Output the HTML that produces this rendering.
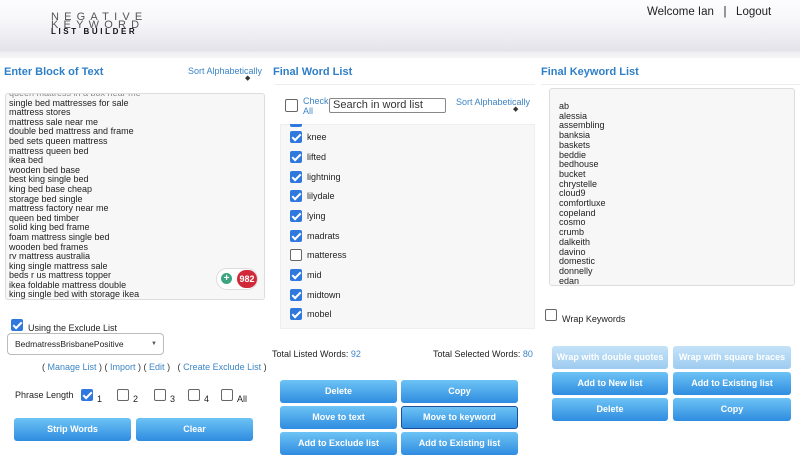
<!DOCTYPE html>
<html><head><style>
*{box-sizing:border-box;margin:0;padding:0}
body{width:800px;height:462px;overflow:hidden;background:#fff;font-family:"Liberation Sans",Arial,sans-serif;position:relative;color:#333}
.a{position:absolute}
.hdr{left:0;top:0;width:800px;height:58px;background:linear-gradient(#fdfdfe 0%,#f6f6f9 40%,#e3e3ea 88%,#f0f0f3 90%,#f4f4f6 100%)}
.h{font-size:11px;font-weight:bold;color:#2f7fc8}
.lnk{font-size:9px;color:#3d85c6}
.ta{border:1px solid #ddd;background:#f7f7f7;border-radius:3px;overflow:hidden}
.ta div{font-size:9px;line-height:9.6px;color:#222;white-space:nowrap}
.btn{position:absolute;height:23px;border-radius:3px;background:linear-gradient(#6dc3f5,#2f8ce0);color:#fff;font-size:9px;font-weight:bold;text-align:center;line-height:23px}
.btn.l{background:linear-gradient(#c5e3f8,#9dcbf0)}
.cb{position:absolute;width:12px;height:12px;border-radius:2px;background:#2f78de}
.cb:after{content:"";position:absolute;left:4px;top:1px;width:3px;height:7px;border:solid #fff;border-width:0 2px 2px 0;transform:rotate(45deg)}
.ub{position:absolute;width:12px;height:12px;border-radius:2px;border:1px solid #666;background:#fff}
.it{position:absolute;left:307px;font-size:9px;color:#222}
.s{font-size:9px;color:#222}
.kw div{line-height:9.7px!important;font-size:9px!important}
</style></head><body>
<div class="a hdr"></div>
<div class="a" style="left:51px;top:13px;font-size:11px;letter-spacing:5.2px;color:#555;line-height:8px">NEGATIVE<br>KEYWORD</div>
<div class="a" style="left:51px;top:28px;font-size:8px;letter-spacing:2.6px;color:#111;font-weight:bold;line-height:7px">LIST BUILDER</div>
<div class="a" style="left:647px;top:6px;font-size:11.5px;color:#222">Welcome Ian &nbsp;&nbsp;| &nbsp;&nbsp;Logout</div>

<div class="a h" style="left:4px;top:66px">Enter Block of Text</div>
<div class="a lnk" style="left:188px;top:66px">Sort Alphabetically</div>
<div class="a" style="left:245px;top:74px;font-size:7px">&#9670;</div>
<div class="a h" style="left:273px;top:66px">Final Word List</div>
<div class="a h" style="left:541px;top:66px">Final Keyword List</div>
<div class="a" style="left:275px;top:84px;width:260px;height:1px;background:#eee"></div>
<div class="a" style="left:541px;top:84px;width:259px;height:1px;background:#eee"></div>

<div class="a ta" style="left:5px;top:93px;width:260px;height:207px;padding:0 0 0 3px">
<div style="margin-top:-5px;color:#888">queen mattress in a box near me</div>
<div>single bed mattresses for sale</div><div>mattress stores</div><div>mattress sale near me</div><div>double bed mattress and frame</div><div>bed sets queen mattress</div><div>mattress queen bed</div><div>ikea bed</div><div>wooden bed base</div><div>best king single bed</div><div>king bed base cheap</div><div>storage bed single</div><div>mattress factory near me</div><div>queen bed timber</div><div>solid king bed frame</div><div>foam mattress single bed</div><div>wooden bed frames</div><div>rv mattress australia</div><div>king single mattress sale</div><div>beds r us mattress topper</div><div>ikea foldable mattress double</div><div>king single bed with storage ikea</div>
</div>
<div class="a" style="left:216px;top:268px;width:42px;height:22px;border-radius:11px;background:#fff;border:1px solid #ddd"></div>
<div class="a" style="left:221px;top:273px;width:11px;height:11px;border-radius:50%;background:#3aa57e;color:#fff;font-size:10px;line-height:11px;text-align:center;font-weight:bold">+</div>
<div class="a" style="left:237px;top:270px;width:20px;height:18px;border-radius:9px;background:#d02a3a;color:#fff;font-size:9px;font-weight:bold;line-height:18px;text-align:center">982</div>

<div class="cb" style="left:11px;top:319px"></div>
<div class="a s" style="left:28px;top:323px">Using the Exclude List</div>
<div class="a" style="left:7px;top:333px;width:157px;height:22px;border:1px solid #bbb;border-radius:4px;background:#fff;font-size:8.5px;line-height:20px;padding-left:7px;color:#222">BedmatressBrisbanePositive<span style="position:absolute;right:6px;font-size:6px;color:#555">&#9660;</span></div>
<div class="a lnk" style="left:42px;top:362px;color:#3d85c6"><span style="color:#333">(</span> Manage List <span style="color:#333">) (</span> Import <span style="color:#333">) (</span> Edit <span style="color:#333">) &nbsp;&nbsp;(</span> Create Exclude List <span style="color:#333">)</span></div>
<div class="a s" style="left:15px;top:390px">Phrase Length</div>
<div class="cb" style="left:81px;top:389px"></div><div class="a s" style="left:97px;top:394px">1</div>
<div class="ub" style="left:117px;top:389px"></div><div class="a s" style="left:133px;top:394px">2</div>
<div class="ub" style="left:154px;top:389px"></div><div class="a s" style="left:170px;top:394px">3</div>
<div class="ub" style="left:188px;top:389px"></div><div class="a s" style="left:204px;top:394px">4</div>
<div class="ub" style="left:221px;top:389px"></div><div class="a s" style="left:237px;top:394px">All</div>
<div class="btn" style="left:14px;top:418px;width:117px">Strip Words</div>
<div class="btn" style="left:136px;top:418px;width:117px">Clear</div>

<div class="a" style="left:280px;top:124px;width:255px;height:205px;background:#f7f7f7;border:1px solid #eee;overflow:hidden"></div>
<div class="cb" style="left:290px;top:124px;height:3px;border-radius:0 0 2px 2px"></div>
<div class="cb" style="left:290px;top:131px"></div><div class="it" style="top:132px">knee</div>
<div class="cb" style="left:290px;top:151px"></div><div class="it" style="top:152px">lifted</div>
<div class="cb" style="left:290px;top:171px"></div><div class="it" style="top:172px">lightning</div>
<div class="cb" style="left:290px;top:190px"></div><div class="it" style="top:191px">lilydale</div>
<div class="cb" style="left:290px;top:210px"></div><div class="it" style="top:211px">lying</div>
<div class="cb" style="left:290px;top:230px"></div><div class="it" style="top:231px">madrats</div>
<div class="ub" style="left:290px;top:249px"></div><div class="it" style="top:250px">matteress</div>
<div class="cb" style="left:290px;top:269px"></div><div class="it" style="top:270px">mid</div>
<div class="cb" style="left:290px;top:289px"></div><div class="it" style="top:290px">midtown</div>
<div class="cb" style="left:290px;top:308px"></div><div class="it" style="top:309px">mobel</div>
<div class="ub" style="left:285px;top:99px;width:13px;height:13px"></div>
<div class="a lnk" style="left:303px;top:96px;line-height:10px">Check<br>All</div>
<div class="a" style="left:329px;top:98px;width:117px;height:15px;border:1px solid #888;border-radius:2px;font-size:11px;line-height:13px;padding-left:3px;color:#333;background:#fff">Search in word list</div>
<div class="a lnk" style="left:456px;top:97px">Sort Alphabetically</div>
<div class="a" style="left:513px;top:105px;font-size:7px">&#9670;</div>

<div class="a s" style="left:272px;top:349px">Total Listed Words: <span style="color:#3d85c6">92</span></div>
<div class="a s" style="left:433px;top:349px">Total Selected Words: <span style="color:#3d85c6">80</span></div>
<div class="btn" style="left:280px;top:380px;width:117px">Delete</div>
<div class="btn" style="left:401px;top:380px;width:117px">Copy</div>
<div class="btn" style="left:280px;top:406px;width:117px">Move to text</div>
<div class="btn" style="left:401px;top:406px;width:117px;border:1px solid #1f4f9a;line-height:21px">Move to keyword</div>
<div class="btn" style="left:280px;top:432px;width:117px">Add to Exclude list</div>
<div class="btn" style="left:401px;top:432px;width:117px">Add to Existing list</div>

<div class="a ta kw" style="left:549px;top:88px;width:246px;height:198px;padding:13px 0 0 9px">
<div>ab</div><div>alessia</div><div>assembling</div><div>banksia</div><div>baskets</div><div>beddie</div><div>bedhouse</div><div>bucket</div><div>chrystelle</div><div>cloud9</div><div>comfortluxe</div><div>copeland</div><div>cosmo</div><div>crumb</div><div>dalkeith</div><div>davino</div><div>domestic</div><div>donnelly</div><div>edan</div><div>eden</div>
</div>
<div class="ub" style="left:545px;top:309px"></div>
<div class="a s" style="left:562px;top:314px">Wrap Keywords</div>
<div class="btn l" style="left:552px;top:346px;width:116px">Wrap with double quotes</div>
<div class="btn l" style="left:673px;top:346px;width:118px">Wrap with square braces</div>
<div class="btn" style="left:552px;top:372px;width:116px">Add to New list</div>
<div class="btn" style="left:673px;top:372px;width:118px">Add to Existing list</div>
<div class="btn" style="left:552px;top:398px;width:116px">Delete</div>
<div class="btn" style="left:673px;top:398px;width:118px">Copy</div>
</body></html>
